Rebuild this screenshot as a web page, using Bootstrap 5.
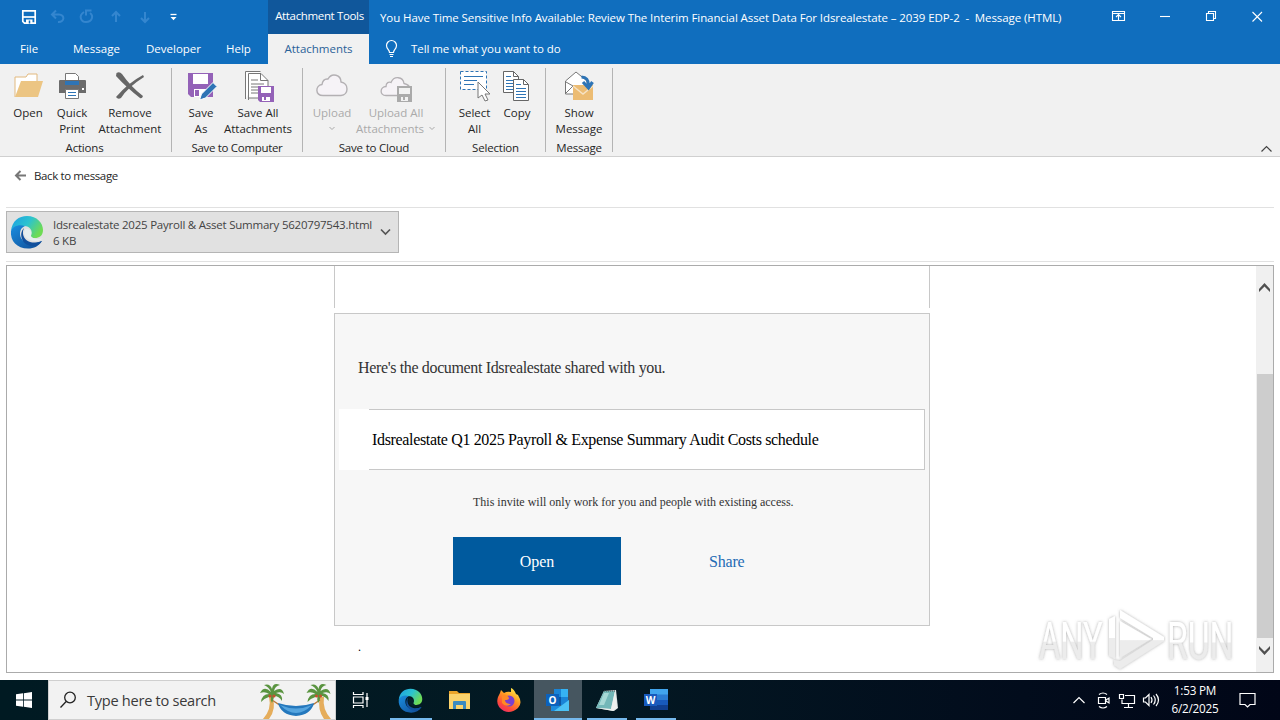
<!DOCTYPE html>
<html lang="en">
<head>
<meta charset="utf-8">
<title>Message (HTML)</title>
<link href="https://cdn.jsdelivr.net/npm/bootstrap@5.3.0/dist/css/bootstrap.min.css" rel="stylesheet">
<style>
body{width:1280px;height:720px;overflow:hidden;background:#fff;color:#262626;font:11.5px/16px "Open Sans","Noto Sans",sans-serif}
svg{display:block;flex:none}
.app-head{height:64px;background:#106ebe;color:#fff}
.head-left{width:268px}
.quick-bar{height:34px;padding-left:21px}
.tab-row{height:30px}
.title-text{letter-spacing:-.088px}
.ctx{width:101px}
.ctx-top{height:34px;background:#10579b;letter-spacing:-.35px;padding:0 0 2px 2px}
.ctx-tab{height:30px;background:#f1f1f1;color:#2b6198}
.title-row{height:34px;padding:1px 0 0 11px}
.ribbon{height:93px;background:#f1f1f1;border-bottom:1px solid #d0d0d0}
.rgroup{height:84px;margin-top:4px;border-right:1px solid #b4b4b4}
.rbtn{height:71px;padding-top:2px}
.rbtn svg{height:32px;margin-bottom:3px}
.off{color:#aaa}
.rlabel{height:16px;line-height:18px;letter-spacing:-.2px}
.back-row{height:51px;margin:0 6px;padding:11px 0 0 8px;border-bottom:1px solid #e1e1e1;letter-spacing:-.38px}
.file-row{height:54px;margin:0 6px;padding-top:3px;border-bottom:1px solid #e1e1e1}
.file-chip{width:393px;height:42px;background:#e1e1e1;border:1px solid #b5b5b5;color:#444;letter-spacing:-.225px}
.file-text{padding-top:2px}
.preview{height:408px;margin:3px 6px 0;border:1px solid #ababab;font-family:"Liberation Serif",serif}
.mail{width:596px;margin-left:327px}
.mail-top{height:42px;border:solid #c8c8c8;border-width:0 1px}
.mail-card{height:313px;margin-top:5px;background:#f7f7f7;border:1px solid #c8c8c8}
.mail-hi{height:95px;padding:42px 0 0 23px;font-size:16px;line-height:24px;color:#333;letter-spacing:-.355px}
.doc-line{height:61px;margin:0 4px}
.doc-pad{width:30px;background:#fff}
.doc-name{background:#fff;border:1px solid #c8c8c8;border-left:0;font-size:16px;color:#000;padding:1px 0 0 3px;letter-spacing:-.342px}
.invite{height:67px;padding:24px 0 0 138px;font-size:12px;color:#333}
.open-btn{width:168px;height:48px;margin-left:118px;padding-top:2px;background:#005a9e;color:#fff;font-size:16px}
.share-lnk{margin-left:88px;padding-top:2px;font-size:16px;color:#1f6cb5;letter-spacing:-.2px}
.vbar{width:17px;background:#f0f0f0}
.thumb{height:264px;margin:0 0 0 1px;background:#cdcdcd}
.taskbar{height:40px;margin-top:7px;background:linear-gradient(90deg,#001a22,#031923 45%,#020c1c 80%,#010617);color:#fff}
.start{width:48px}
.search{width:288px;background:#f2f2f2;border:1px solid #cfcfcf;color:#3a3a3a;font-size:14.6px;letter-spacing:-.28px}
.task{width:49px;height:40px;position:relative}
.task.live::after{content:"";position:absolute;left:5px;right:4px;bottom:0;height:2px;background:#76b9ed}
.task.now{background:#465660;width:48px}
.task.now::after{left:0;right:0}
.tray{padding-right:24px}
.clock{width:64px;line-height:18px;font-size:11.7px;letter-spacing:-.2px;margin-left:1px;padding-bottom:2px}
.wmark{position:absolute;left:1030px;top:604px}
</style>
</head>
<body class="d-flex flex-column">
<header class="app-head d-flex">
  <div class="head-left">
    <div class="quick-bar d-flex align-items-center">
      <svg width="170" height="34" viewBox="21 0 170 34" fill="none" stroke-width="2">
        <path d="M22.800 10.800H35.200V23.200H24.500L22.800 21.500Z" stroke="#fff" stroke-width="1.700"/><path d="M23 17H35" stroke="#fff" stroke-width="1.700"/><path d="M26 19.500h6.500V24H26z" fill="#fff"/><path d="M29.500 20.500v3" stroke="#106ebe" stroke-width="1.500"/>
        <g stroke="#3486cf"><path d="M56 10.500l-4 4 4 4M52.500 14.500H59c6 0 6 8-1 7.500"/><path d="M84 12c-6 4-3 10 2 10 6 0 8-6 4-9M91.500 10.500h-5.500v5"/><path d="M116 22V12M112 16l4-4 4 4"/><path d="M145 12v10M141 18l4 4 4-4"/></g>
        <path d="M170.500 14.500h6" stroke="#fff" stroke-width="1.300"/><path d="M170.500 17h6l-3 3.300z" fill="#fff"/>
      </svg>
    </div>
    <nav class="tab-row d-flex align-items-center">
      <span style="margin-left:20px;width:53px">File</span><span style="width:73px">Message</span><span style="width:80px">Developer</span><span>Help</span>
    </nav>
  </div>
  <div class="ctx">
    <div class="ctx-top d-flex align-items-center justify-content-center">Attachment Tools</div>
    <div class="ctx-tab d-flex align-items-center justify-content-center">Attachments</div>
  </div>
  <div class="flex-grow-1">
    <div class="title-row d-flex align-items-center"><span class="text-nowrap title-text">You Have Time Sensitive Info Available: Review The Interim Financial Asset Data For Idsrealestate – 2039 EDP-2 &nbsp;- &nbsp;Message (HTML)</span>
      <svg class="ms-auto" width="175" height="32" viewBox="1105 1.500 175 32" fill="none" stroke="#fff" stroke-width="1.100"><path d="M1112.500 11h12v9h-12zM1112.500 13h12M1118.500 19.500v-5M1116 16.500l2.500-2.500 2.500 2.500"/><path d="M1160 16h10"/><path d="M1206.500 13h7v7h-7zM1208.500 12.500V11h7v7H1214"/><path d="M1252.500 11.500l9.500 9.500M1262 11.500l-9.500 9.500"/></svg>
    </div>
    <div class="tab-row d-flex align-items-center">
      <svg style="margin-left:15px" width="16" height="20" viewBox="0 0 16 20" fill="none" stroke="#fff" stroke-width="1.200"><path d="M5.500 13.500c0-3-3-3.500-3-7a5 5 0 0 1 10 0c0 3.500-3 4-3 7zM5.500 15.500h4M6 17.500h3"/></svg>
      <span style="margin-left:11px;letter-spacing:-.06px">Tell me what you want to do</span>
    </div>
  </div>
</header>

<section class="ribbon d-flex">
  <div class="rgroup text-center" style="width:172px">
    <div class="d-flex" style="padding-left:8px">
      <div class="rbtn d-flex flex-column align-items-center" style="width:40px"><svg width="32" viewBox="0 0 32 32"><path d="M3 27V7h11l2-3h9v7" fill="#fff" stroke="#e2b97e"/><path d="M3 27L9 11h22l-5 16z" fill="#ecc583"/></svg>Open</div>
      <div class="rbtn d-flex flex-column align-items-center" style="width:48px"><svg width="32" viewBox="0 0 32 32"><path d="M9.500 11V3.500h10l3 3V11" fill="#fff" stroke="#777"/><path d="M3 11q0-1 1-1h25q1 0 1 1v12H3z" fill="#6b6b6b"/><path d="M9 11h14v4H9z" fill="#2e74b5"/><path d="M9.500 19.500h13v9h-13z" fill="#fff" stroke="#777"/><path d="M12 22.500h8M12 25.500h8" stroke="#2e74b5"/><path d="M26 19h2" stroke="#fff" stroke-width="2"/></svg>Quick<br>Print</div>
      <div class="rbtn d-flex flex-column align-items-center" style="width:68px;letter-spacing:.03px"><svg width="32" viewBox="0 0 32 32" fill="#666"><path d="M2.500 3q3-2 5.500 1 9 13 21 22-1 3-3 2Q12 17 2 6z"/><path d="M29 5l1 2Q14 17 7 28q-3 2-5-1Q14 13 29 5z"/></svg>Remove<br>Attachment</div>
    </div>
    <div class="rlabel" style="padding-right:2px">Actions</div>
  </div>
  <div class="rgroup text-center" style="width:131px">
    <div class="d-flex" style="padding-left:9px">
      <div class="rbtn d-flex flex-column align-items-center" style="width:40px"><svg width="32" viewBox="0 0 32 32"><path d="M3 3h25v24H6l-3-3z" fill="#9462b8"/><path d="M8 4h15v10H8zM9 19h13v8H9z" fill="#fff"/><path d="M10 20h4v6h-4z" fill="#9462b8"/><path d="M14.500 30l2-6L28 12.500l4 4L20.500 28z" fill="#2e74b5" stroke="#fff"/></svg>Save<br>As</div>
      <div class="rbtn d-flex flex-column align-items-center" style="width:74px"><svg width="32" viewBox="0 0 32 32" fill="none"><path d="M3.500 29V1.500h15M6.500 30V3.500H19l7 7V28H6.500" fill="#fff" stroke="#777"/><path d="M18.500 3.500v7H26M9 10h7M9 14h13M9 17h8M9 20h7M9 23h7" stroke="#777"/><path d="M16 16h16v16H18l-2-2z" fill="#9462b8"/><path d="M19 17h10v6H19zM20 27h8v4h-8z" fill="#fff"/><path d="M22 27h2v3h-2z" fill="#9462b8"/></svg>Save All<br>Attachments</div>
    </div>
    <div class="rlabel" style="letter-spacing:-.32px">Save to Computer</div>
  </div>
  <div class="rgroup text-center" style="width:143px">
    <div class="d-flex off" style="padding-left:8px">
      <div class="rbtn d-flex flex-column align-items-center" style="width:42px"><svg width="34" viewBox="0 0 34 32"><path d="M8 25.500c-8 0-8-10-1-11C8 8 12 9 13 9c4-7 13-4 13 3 8 1 8 13 0 13.500z" fill="#f6f3f7" stroke="#b3b0b3" stroke-width="1.400"/></svg>Upload<svg width="8" height="6" viewBox="0 0 8 6" style="height:6px;margin-top:5px" fill="none" stroke="#aaa"><path d="M1.500 1L4 3.500 6.500 1"/></svg></div>
      <div class="rbtn d-flex flex-column align-items-center" style="width:86px"><svg width="32" viewBox="0 0 32 32"><path d="M6 25.500c-7 0-6-9 0-9 0-4 3-5 5-4 3-7 12-6 13 1 5 1 6 4 6 6v6z" fill="#f6f3f7" stroke="#b3b0b3" stroke-width="1.300"/><path d="M17 16h15v16H17z" fill="#aaa"/><path d="M19 18h11v6H19zM21 27h7v4h-7z" fill="#f1f1f1"/><path d="M23 27h2v3h-2z" fill="#aaa"/></svg>Upload All<span class="d-flex align-items-center">Attachments<svg width="8" height="6" viewBox="0 0 8 6" style="height:6px;margin:0 0 0 4px" fill="none" stroke="#aaa"><path d="M1.500 1L4 3.500 6.500 1"/></svg></span></div>
    </div>
    <div class="rlabel">Save to Cloud</div>
  </div>
  <div class="rgroup text-center" style="width:100px">
    <div class="d-flex" style="padding-left:9px">
      <div class="rbtn d-flex flex-column align-items-center" style="width:39px"><svg width="32" viewBox="0 0 32 32" fill="none"><path d="M1.500 1.500h26v18h-26z" fill="#fff" stroke="#2e74b5" stroke-dasharray="3 2"/><path d="M5 6.500h19M5 10.500h13M5 14.500h10" stroke="#2e74b5"/><path d="M19 12v16l4-3 3 6 3-1-3-6h5z" fill="#fff" stroke="#777"/></svg>Select<br>All</div>
      <div class="rbtn d-flex flex-column align-items-center" style="width:46px"><svg width="32" viewBox="0 0 32 32" fill="none"><g id="pg"><path d="M2.500 1.500h10l5 5v16h-15z" fill="#fff" stroke="#666"/><path d="M12.500 1.500v5h5" stroke="#666"/><path d="M5 6.500h5M5 10.500h10M5 13.500h10M5 16.500h10M5 19.500h10" stroke="#2e74b5"/></g><use href="#pg" x="10" y="8"/></svg>Copy</div>
    </div>
    <div class="rlabel">Selection</div>
  </div>
  <div class="rgroup text-center" style="width:67px">
    <div class="rbtn d-flex flex-column align-items-center"><svg width="32" viewBox="0 0 32 32"><path d="M2.500 24V11L13 2l11 9v13z" fill="#fff" stroke="#777"/><path d="M3 23l7-7-7-4" fill="none" stroke="#777"/><path d="M10 15h20v15H10z" fill="#ecbc73"/><path d="M10 16l10 8 10-8" fill="none" stroke="#f6e3c4" stroke-width="1.500"/><path d="M18.500 7c6 0 7 4 7 9m-5.500-4l5.500 6 4-6" fill="none" stroke="#2e74b5" stroke-width="3.200"/></svg>Show<br>Message</div>
    <div class="rlabel">Message</div>
  </div>
  <svg class="ms-auto align-self-end" style="margin:0 7px 3px 0" width="13" height="8" viewBox="0 0 13 8" fill="none" stroke="#444" stroke-width="1.200"><path d="M1.500 6.500l5-5 5 5"/></svg>
</section>

<div class="back-row d-flex align-items-start"><svg style="margin:2px 7px 0 0" width="13" height="12" viewBox="0 0 13 12" fill="none" stroke="#777" stroke-width="2"><path d="M12 5.500H2M6.500 1L2 5.500 6.500 10"/></svg>Back to message</div>
<div class="file-row">
  <div class="file-chip d-flex align-items-center">
    <svg style="margin:0 9px 0 3px" width="34" height="34" viewBox="0 0 34 34"><defs>
      <linearGradient id="ea" x1="0" y1="0" x2="1" y2=".5"><stop offset="0" stop-color="#1c9ee4"/><stop offset=".55" stop-color="#2cc3cf"/><stop offset="1" stop-color="#6edb55"/></linearGradient>
      <linearGradient id="eb" x1="0" y1="0" x2="1" y2="1"><stop offset="0" stop-color="#1a8ee0"/><stop offset="1" stop-color="#114b94"/></linearGradient></defs>
      <g id="edge"><path d="M1 16C2 6 9 1 17 1c10 0 16 7 16 14 0 6-4 8-8 8-5 0-6-2-4-4 2-3-1-8-7-8C8 11 3 13 1 16z" fill="url(#ea)"/><path d="M1 16c2-5 8-7 14-5-5 2-6 7-4 12 3 6 11 7 21 3-3 5-8 7.500-14 7.500C7 33.500 0 26 1 16z" fill="url(#eb)"/><path d="M14 13c-6 6-2 18 9 18 4 0 7-2 9-5-10 4-18 0-19-7q-.5-3 1-6z" fill="#12509c"/></g><path d="M15.500 14c-4 5 1 12 10 12 4 0 6-1 7.500-3-3 2-12 1-12-2.500 2-3-1-7-5.500-6.500z" fill="#e6eef0"/></svg>
    <div class="file-text text-nowrap"><div>Idsrealestate 2025 Payroll &amp; Asset Summary 5620797543.html</div><div>6 KB</div></div>
    <svg class="ms-auto" style="margin-right:7px" width="11" height="8" viewBox="0 0 11 8" fill="none" stroke="#555" stroke-width="1.700"><path d="M1 1.500l4.500 4.500L10 1.500"/></svg>
  </div>
</div>

<main class="preview d-flex">
  <div class="flex-grow-1">
    <div class="mail">
      <div class="mail-top"></div>
      <div class="mail-card">
        <div class="mail-hi">Here's the document Idsrealestate shared with you.</div>
        <div class="doc-line d-flex"><div class="doc-pad"></div><div class="doc-name flex-grow-1 d-flex align-items-center">Idsrealestate Q1 2025 Payroll &amp; Expense Summary Audit Costs schedule</div></div>
        <div class="invite">This invite will only work for you and people with existing access.</div>
        <div class="d-flex align-items-center"><div class="open-btn d-flex align-items-center justify-content-center">Open</div><div class="share-lnk">Share</div></div>
      </div>
      <div style="padding:13px 0 0 24px;font-size:12px;color:#000">.</div>
    </div>
  </div>
  <div class="vbar">
    <div class="d-flex align-items-start" style="height:108px;padding:16px 0 0 2px"><svg width="13" height="11" viewBox="0 0 13 11"><path d="M1 10V7l5.500-6L12 7v3L6.500 4.500z" fill="#505050"/></svg></div>
    <div class="thumb"></div>
    <div style="padding:7px 0 0 2px"><svg width="13" height="11" viewBox="0 0 13 11"><path d="M1 1v3l5.500 6L12 4V1L6.500 6.500z" fill="#505050"/></svg></div>
  </div>
</main>

<footer class="taskbar d-flex align-items-stretch">
  <div class="start d-flex align-items-center justify-content-center"><svg width="16" height="16" viewBox="0 0 16 16" fill="#fff"><path d="M0 2.300L7 1.300V7.600H0zM7.800 1.200L16 0V7.600H7.800zM0 8.400h7v6.300l-7-1zM7.800 8.400H16V16l-8.200-1.200z"/></svg></div>
  <div class="search d-flex align-items-center">
    <svg style="margin:0 10px 0 10px" width="18" height="18" viewBox="0 0 18 18" fill="none" stroke="#222" stroke-width="1.300"><circle cx="11" cy="6.500" r="5.300"/><path d="M7.200 10.500L1.500 16.500"/></svg><span>Type here to search</span>
    <svg class="ms-auto" style="margin-right:0" width="76" height="38" viewBox="260 681 76 38"><path d="M273 697q5 11-3 22h-6q9-10 6-22zM321 697q-3 12 4 22h7q-9-10-7-22z" fill="#e5ad5b"/><path d="M273 700l9 6M321 700l-9 6" stroke="#b97738" stroke-width="1.500"/><path d="M279 703q18 6 36 0-3 12-18 13-15-1-18-13z" fill="#2478bd"/><path d="M281 705q16 7 32 0-8 8-16 8t-16-8z" fill="#55a5df"/>
      <g id="palm" fill="#5a9440"><path d="M272 692q-7-7-11 1 5-2 9 1-7 0-8 8 4-4 10-6-1 4 1 7 2-4 2-7 5 0 8 5 1-7-6-8 5-2 8 1-2-8-10-3 1-5 6-6-7-3-8 4-2-6-8-4 5 2 7 7z"/><circle cx="271" cy="696" r="1.600" fill="#c4512f"/><circle cx="275" cy="696" r="1.600" fill="#c4512f"/></g><use href="#palm" x="46.500"/></svg>
  </div>
  <div class="task d-flex align-items-center justify-content-center"><svg width="18" height="16" viewBox="0 0 18 16" fill="none" stroke="#fff" stroke-width="1.200"><path d="M1.500 0v2.500h9.500V0M1.500 5h9.500v6H1.500zM1.500 16v-2.500H11V16M15 1v14"/><path d="M13.500 5h3v3h-3z" fill="#fff" stroke="none"/></svg></div>
  <div class="task live d-flex align-items-center justify-content-center" style="width:51px"><svg width="25" height="25" viewBox="0 0 34 34"><use href="#edge"/><path d="M15.500 14c-4 5 1 12 10 12 4 0 6-1 7.500-3-3 2-12 1-12-2.500 2-3-1-7-5.500-6.500z" fill="#06202c"/></svg></div>
  <div class="task d-flex align-items-center justify-content-center" style="width:48px"><svg width="22" height="20" viewBox="0 0 22 20"><path d="M0 1h8l2 2h11v16H0z" fill="#eca52a"/><path d="M0 4h21v15H0z" fill="#fcd36c"/><path d="M4 19v-7q0-1 1-1h11q1 0 1 1v7h-3v-4H7v4z" fill="#3c8ac0"/></svg></div>
  <div class="task d-flex align-items-center justify-content-center" style="width:50px"><svg width="24" height="24" viewBox="0 0 24 24"><defs><linearGradient id="ff" x1=".8" y1="0" x2=".2" y2="1"><stop offset="0" stop-color="#fff44f"/><stop offset=".4" stop-color="#ff9a22"/><stop offset=".75" stop-color="#ff4a3a"/><stop offset="1" stop-color="#e92a6c"/></linearGradient></defs><path d="M3 5l1-3 3 3q3-2 7-1l0-4q3 1 5 6l2 1q5 8 0 13-7 6-14 3Q-2 18 1 9z" fill="url(#ff)"/><circle cx="12" cy="13" r="5.500" fill="#7a3fd0"/><path d="M5 7q5-1 7 3 0 2-4 2 0 4 6 4-5 4-9-1z" fill="#ff8a25"/></svg></div>
  <div class="task live now d-flex align-items-center justify-content-center"><svg width="24" height="22" viewBox="0 0 24 22"><path d="M8 0h14v16H8z" fill="#1a84d6"/><path d="M15 0h7v8h-7z" fill="#36b3f2"/><path d="M8 8h7v8H8z" fill="#0c57a5"/><path d="M5 11l9 6 9-6v11H5z" fill="#1c8bdc"/><path d="M23 11v11H8z" fill="#4cc2f5"/><path d="M0 5h13v12H0z" fill="#0b62bd"/><text x="6.500" y="14.500" font-size="10" font-weight="700" text-anchor="middle" fill="#fff">O</text></svg></div>
  <div class="task live d-flex align-items-center justify-content-center"><svg width="24" height="24" viewBox="0 0 24 24"><path d="M1 20L9 3l12-1 2 18-4 3z" fill="#dfe6e6"/><path d="M1 20L9 3l11 0-4 18z" fill="#73b7b8"/><path d="M4 17L9 5l5 0-5 12z" fill="#a7d8d5"/><path d="M1 20l15 1 4-18 2 17-4 3z" fill="#eef0ee"/><path d="M9 3h12" stroke="#555" stroke-dasharray="1 1"/></svg></div>
  <div class="task live d-flex align-items-center justify-content-center"><svg width="24" height="22" viewBox="0 0 24 22"><path d="M6 0h18v6H6z" fill="#41a5ee"/><path d="M6 5.500h18V11H6z" fill="#2b7cd3"/><path d="M6 11h18v5.500H6z" fill="#185abd"/><path d="M6 16h18v5H6z" fill="#103f91"/><path d="M0 5h13v12H0z" fill="#185abd"/><text x="6.500" y="14.500" font-size="10" font-weight="700" text-anchor="middle" fill="#fff">W</text></svg></div>
  <div class="tray d-flex align-items-center ms-auto">
    <svg width="92" height="24" viewBox="1070 688 92 24" fill="none" stroke="#fff" stroke-width="1.200"><path d="M1073.500 703l5.500-5.500 5.500 5.500"/><path d="M1098.500 697.500h7v6h-7zM1106 700l3-2v5l-3-2M1099 694.500q4-3 8 0M1099 706.500q4 3 8 0"/><path d="M1119.500 694.500h4v4h-4zM1125 695.500h9.500v8h-12.500v-4M1128.500 704v3M1124 707.500h9"/><path d="M1143.500 698v4h2l3.500 3.500v-11l-3.500 3.500zM1151 697q2 3 0 6M1153.500 695.500q3.500 4.500 0 9M1156 694q5 6 0 12"/></svg>
    <div class="clock text-center">1:53 PM<br>6/2/2025</div>
    <svg style="margin-left:12px" width="17" height="18" viewBox="0 0 17 18" fill="none" stroke="#fff" stroke-width="1.200"><path d="M1 2.500h15v11h-5L8.500 16 6 13.500H1z"/></svg>
  </div>
</footer>

<svg class="wmark" width="250" height="72" viewBox="1030 604 250 72">
  <defs><linearGradient id="wg" x1="0" y1="0" x2="0" y2="1"><stop offset=".5" stop-color="#fff"/><stop offset=".52" stop-color="#ececec"/></linearGradient>
  <filter id="ws" x="-10%" y="-20%" width="120%" height="140%"><feDropShadow dx="0" dy="0" stdDeviation="1.400" flood-color="#666" flood-opacity=".55"/></filter></defs>
  <g filter="url(#ws)" fill="url(#wg)" font-family="Roboto,sans-serif" font-weight="400" font-size="51">
    <text transform="translate(1039 659) scale(.64 1)">ANY</text>
    <text transform="translate(1167 659) scale(.66 1)">RUN</text>
    <path fill-rule="evenodd" d="M1120 610l44 27v4l-44 28-6-4v-5l6 1 33-21v-2l-33-20zM1120 621l31 18-31 19z"/>
    <path d="M1109 619l6-3v43l-6-3z"/>
  </g>
</svg>
<script src="https://cdn.jsdelivr.net/npm/bootstrap@5.3.0/dist/js/bootstrap.bundle.min.js"></script>
</body>
</html>
